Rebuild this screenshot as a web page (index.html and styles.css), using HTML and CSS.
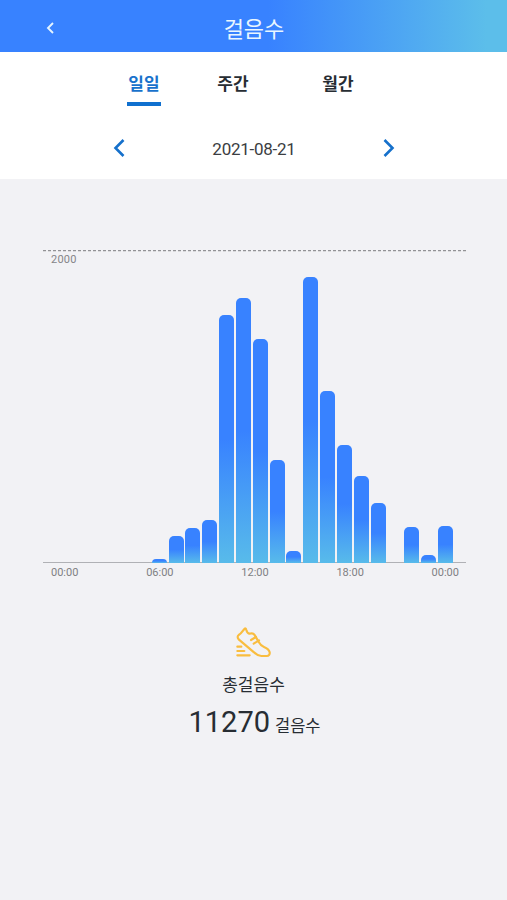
FILE: index.html
```
<!DOCTYPE html>
<html lang="ko">
  <head>
    <meta charset="utf-8">
    <title>걸음수</title>
    <link rel="stylesheet" href="styles.css">
  </head>
<body>
  <header class="topbar">
    <svg class="back" viewBox="0 0 8 12"><path d="M7 1L2 6l5 5"/></svg>
    <h1>걸음수</h1>
  </header>

  <div class="panel">
    <nav class="tabs">
      <a class="tab active">일일</a>
      <a class="tab">주간</a>
      <a class="tab">월간</a>
    </nav>
    <div class="date-row">
      <svg class="arrow" viewBox="0 0 12 18"><path d="M10.500 1L2.500 9l8 8"/></svg>
      <span class="date">2021-08-21</span>
      <svg class="arrow" viewBox="0 0 12 18"><path d="M1.500 1l8 8-8 8"/></svg>
    </div>
  </div>

  <!-- hourly steps -->
  <section class="chart">
    <svg class="limit" viewBox="0 0 423 3"><path d="M0 1.600h423"/></svg>
    <span class="max">2000</span>
    <div class="bars">
      <div class="bar" style="height: 4px"></div>
      <div class="bar" style="height: 27px"></div>
      <div class="bar" style="height: 35px"></div>
      <div class="bar" style="height: 43px"></div>
      <div class="bar" style="height: 248px"></div>
      <div class="bar" style="height: 265px"></div>
      <div class="bar" style="height: 224px"></div>
      <div class="bar" style="height: 103px"></div>
      <div class="bar" style="height: 12px"></div>
      <div class="bar" style="height: 286px"></div>
      <div class="bar" style="height: 172px"></div>
      <div class="bar" style="height: 118px"></div>
      <div class="bar" style="height: 87px"></div>
      <div class="bar" style="height: 60px"></div>
      <div class="bar" style="height: 0px"></div>
      <div class="bar" style="height: 36px"></div>
      <div class="bar" style="height: 8px"></div>
      <div class="bar" style="height: 37px"></div>
    </div>
    <div class="hours">
      <span>00:00</span>
      <span>06:00</span>
      <span>12:00</span>
      <span>18:00</span>
      <span>00:00</span>
    </div>
  </section>

  <section class="total">
    <svg class="shoe" viewBox="0 0 105 91">
      <path d="M26 4C21 9 17 18 8 23C4 26 4 31 8 36L54 75C62 83 68 86 76 86H92C99 86 102 81 101 75C99 66 92 62 84 59C74 55 71 49 67 42L55 22C51 16 46 18 42 19C36 20 33 15 31 8C30 4 28 2 26 4Z"/>
      <path d="M45 38L60 29M53 49L69 39"/>
      <path d="M4 58h12M4 71h21M4 84h37"/>
    </svg>
    <h2>총걸음수</h2>
    <p class="count"><b>11270</b> <span>걸음수</span></p>
  </section>
</body>
</html>
```

FILE: styles.css
```
* {
  box-sizing: border-box;
}
body {
  margin: 0;
  min-height: 900px;
  background: #f2f2f5;
  color: #272d33;
  font-family: Roboto, "Noto Sans CJK KR", sans-serif;
}
h1, h2, p {
  margin: 0;
  font-weight: 400;
}
svg {
  display: block;
  fill: none;
}

.topbar {
  display: grid;
  grid-template-columns: 54px 1fr 54px;
  align-items: center;
  height: 52px;
  padding-top: 4px;
  background: linear-gradient(to right, #3882ff 53%, #5cbeea 96%);
  color: #e9f6ff;
}
.topbar h1 {
  padding: 3px 0 0 1px;
  font-size: 22px;
  line-height: 30px;
  text-align: center;
}
.back {
  width: 8px;
  height: 12px;
  justify-self: end;
  stroke: #e4f4ff;
  stroke-width: 1.9;
}

.panel {
  height: 127px;
  background: #fff;
}
.tabs {
  display: flex;
  padding: 20px 0 0 127px;
}
.tab {
  width: 34px;
  height: 34px;
  margin-right: 55px;
  font-size: 17px;
  font-weight: 700;
  line-height: 25px;
  text-align: center;
}
.tab:nth-child(2) {
  margin-right: 71px;
}
.tab.active {
  border-bottom: 4px solid #1070cf;
  color: #1872cc;
}
.date-row {
  display: flex;
  justify-content: space-between;
  align-items: center;
  height: 24px;
  margin: 30px 112px 0 113px;
}
.arrow {
  width: 12px;
  height: 18px;
  stroke: #1570cb;
  stroke-width: 2.6;
}
.date {
  padding-top: 2px;
  font-size: 17px;
  letter-spacing: -0.25px;
  color: #3b3e42;
}

.chart {
  width: 423px;
  margin: 70px 0 0 43px;
}
.limit {
  width: 423px;
  height: 3px;
  stroke: #929295;
  stroke-width: 1.3;
  stroke-dasharray: 3 2;
}
.max {
  display: block;
  height: 15px;
  padding-left: 8px;
  font-size: 11px;
  line-height: 15px;
  letter-spacing: 0.2px;
  color: #858588;
}
.bars {
  display: grid;
  grid-template-columns: repeat(18, 1fr);
  column-gap: 1.8px;
  align-items: end;
  height: 296px;
  padding: 0 13px 0 108.7px;
  /* axis line, the bars stand on top of it */
  box-shadow: inset 0 -1px #b0b1b5;
}
.bar {
  border-radius: 5px 5px 0 0;
  background: linear-gradient(#3882ff 50%, #58bbea);
}
.hours {
  display: flex;
  justify-content: space-between;
  padding: 3px 7px 0 8px;
  font-size: 11px;
  line-height: 13px;
  color: #7f7f83;
}

.total {
  display: flex;
  flex-direction: column;
  align-items: center;
  margin-top: 48px;
}
.shoe {
  width: 35px;
  height: 31px;
  stroke: #f9bd3f;
  stroke-width: 6.5;
  stroke-linecap: round;
  stroke-linejoin: round;
}
.total h2 {
  margin-top: 15px;
  font-size: 17px;
  line-height: 24px;
}
.count {
  margin-top: 7px;
  padding-left: 2px;
  line-height: 36px;
}
.count b {
  font-size: 29px;
  font-weight: 400;
}
.count span {
  margin-left: 1px;
  font-size: 16.5px;
}
```
